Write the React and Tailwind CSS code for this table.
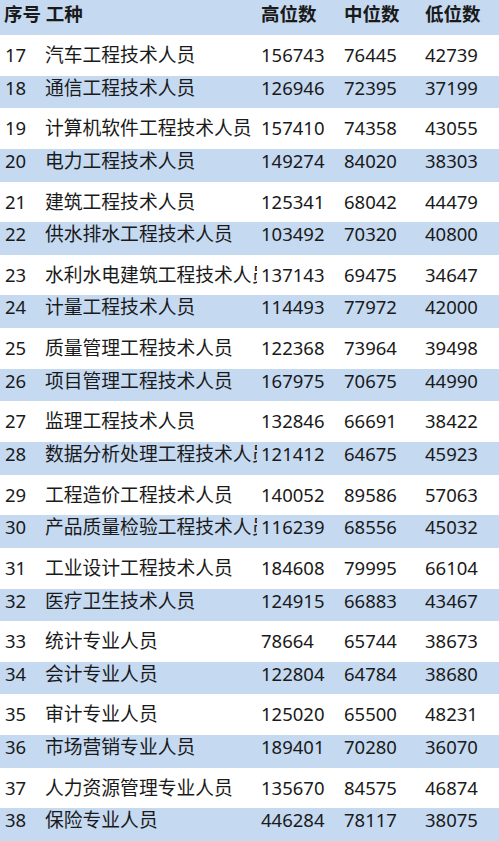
const ROWS = [
  [17, '汽车工程技术人员', 156743, 76445, 42739],
  [18, '通信工程技术人员', 126946, 72395, 37199],
  [19, '计算机软件工程技术人员', 157410, 74358, 43055],
  [20, '电力工程技术人员', 149274, 84020, 38303],
  [21, '建筑工程技术人员', 125341, 68042, 44479],
  [22, '供水排水工程技术人员', 103492, 70320, 40800],
  [23, '水利水电建筑工程技术人员', 137143, 69475, 34647],
  [24, '计量工程技术人员', 114493, 77972, 42000],
  [25, '质量管理工程技术人员', 122368, 73964, 39498],
  [26, '项目管理工程技术人员', 167975, 70675, 44990],
  [27, '监理工程技术人员', 132846, 66691, 38422],
  [28, '数据分析处理工程技术人员', 121412, 64675, 45923],
  [29, '工程造价工程技术人员', 140052, 89586, 57063],
  [30, '产品质量检验工程技术人员', 116239, 68556, 45032],
  [31, '工业设计工程技术人员', 184608, 79995, 66104],
  [32, '医疗卫生技术人员', 124915, 66883, 43467],
  [33, '统计专业人员', 78664, 65744, 38673],
  [34, '会计专业人员', 122804, 64784, 38680],
  [35, '审计专业人员', 125020, 65500, 48231],
  [36, '市场营销专业人员', 189401, 70280, 36070],
  [37, '人力资源管理专业人员', 135670, 84575, 46874],
  [38, '保险专业人员', 446284, 78117, 38075],
];

const GRID = 'grid grid-cols-[45px_212px_85px_81px_1fr] leading-[24px]';

function Row({ row, shaded }) {
  const [no, name, hi, mid, lo] = row;
  return (
    <div className={`${GRID} flex-1 items-start ${shaded ? 'bg-[#c5d9f1] pt-0' : 'bg-white pt-[8px]'}`}>
      <div className="pl-[5px]">{no}</div>
      <div className="overflow-hidden whitespace-nowrap pr-[2px] text-[18.8px]">{name}</div>
      <div className="pl-[4px]">{hi}</div>
      <div className="pl-[2px]">{mid}</div>
      <div className="pl-[2px]">{lo}</div>
    </div>
  );
}

export default function App() {
  const pairs = [];
  for (let i = 0; i < ROWS.length; i += 2) pairs.push([ROWS[i], ROWS[i + 1]]);

  return (
    <div
      className="w-[499px] h-[841px] flex flex-col text-[18.5px] text-[#1a1a1a] overflow-hidden"
      style={{ fontFamily: '"Noto Sans", "Noto Sans CJK SC", sans-serif' }}
    >
      <div className={`${GRID} h-[35px] shrink-0 bg-[#c5d9f1] pt-[2px] font-bold`}>
        <div className="col-span-2 pl-[4px] whitespace-nowrap">序号 工种</div>
        <div className="pl-[4px]">高位数</div>
        <div className="pl-[2px]">中位数</div>
        <div className="pl-[2px]">低位数</div>
      </div>
      {pairs.map((p) => (
        <div key={p[0][0]} className="flex-1 flex flex-col">
          <Row row={p[0]} />
          <Row row={p[1]} shaded />
        </div>
      ))}
    </div>
  );
}
